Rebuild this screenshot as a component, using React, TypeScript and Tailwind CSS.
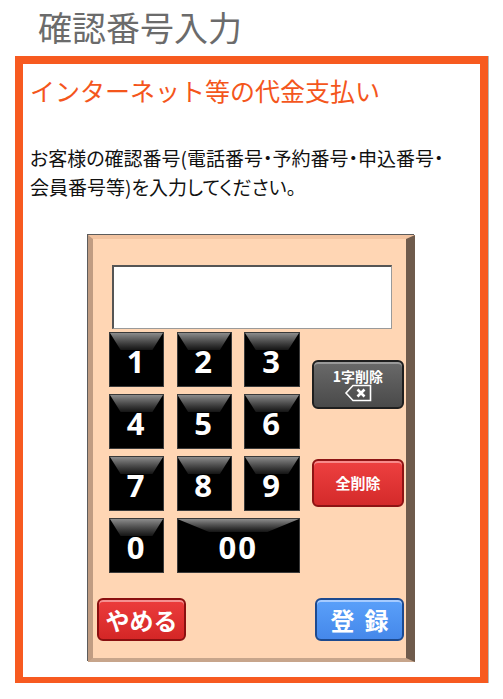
import React from 'react';

const jp = { fontFamily: '"Noto Sans CJK JP", "Noto Sans", sans-serif' };
const num = { fontFamily: '"Open Sans", "DejaVu Sans", sans-serif' };

function Key({ label, wide }: { label: string; wide?: boolean }) {
  return (
    <div
      className={
        wide
          ? 'relative col-span-2 h-[55px] bg-black border border-[#3a3a3a] overflow-hidden flex items-center justify-center'
          : 'relative h-[55px] bg-black border border-[#3a3a3a] overflow-hidden flex items-center justify-center'
      }
    >
      {wide ? (
        <div className="absolute left-0 right-0 top-0 h-[13px] bg-gradient-to-b from-[#8c8c8c] to-[#151515] [clip-path:polygon(0_0,100%_0,74%_100%,26%_100%)]" />
      ) : (
        <div className="absolute left-0 right-0 top-0 h-[17px] bg-gradient-to-b from-[#8c8c8c] to-[#151515] [clip-path:polygon(0_0,100%_0,80%_100%,20%_100%)]" />
      )}
      <span style={num} className="relative mt-[4px] text-white font-bold text-[31px] leading-none tracking-[2px]">
        {label}
      </span>
    </div>
  );
}

function BackspaceIcon() {
  return (
    <svg width="28" height="18" viewBox="0 0 28 18">
      <path d="M9 1.5H26.5V16.5H9L2 9Z" fill="none" stroke="white" strokeWidth="1.6" strokeLinejoin="miter" />
      <path d="M13.5 5.5L20.5 12.5M20.5 5.5L13.5 12.5" stroke="white" strokeWidth="2.6" />
    </svg>
  );
}

export default function App() {
  return (
    <div className="w-[503px] h-[699px] bg-white overflow-hidden" style={jp}>
      <div className="pl-[38px] pt-[10px] text-[34px] leading-[34px] text-[#6b6b6b]">確認番号入力</div>

      <div className="ml-[15px] mt-[12px] w-[473px] h-[627px] border-[8px] border-b-[6px] border-[#f75a20] shadow-[1px_0_0_#b9b9b9] bg-white">
        <div className="pl-[7px] pt-[14px] text-[25px] leading-[25px] text-[#f4561c]">インターネット等の代金支払い</div>

        <p className="pl-[7px] mt-[40px] text-[19px] leading-[29px] text-[#111] [font-feature-settings:'palt']">
          お客様の確認番号(電話番号・予約番号・申込番号・
          <br />
          会員番号等)を入力してください。
        </p>

        {/* keypad panel */}
        <div className="ml-[65px] mt-[34px] w-[327px] h-[427px] shadow-[-1px_-1px_0_#5c5c5c]">
          <div className="w-full h-full bg-[#ffd6b4] border-t-[4px] border-l-[5px] border-r-[9px] border-b-[4px] border-t-[#f2c3a0] border-l-[#c09c82] border-r-[#6f5b4c] border-b-[#c7a58b] box-border">
            <div className="ml-[19px] mt-[26px] w-[280px] h-[64px] bg-white border-t-[2px] border-l-[2px] border-r border-b border-t-[#555] border-l-[#555] border-r-[#9a9a9a] border-b-[#9a9a9a]" />

            <div className="flex mt-[3px] ml-[16px]">
              <div className="grid grid-cols-[55px_55px_56px] gap-x-[12.5px] gap-y-[7px]">
                <Key label="1" />
                <Key label="2" />
                <Key label="3" />
                <Key label="4" />
                <Key label="5" />
                <Key label="6" />
                <Key label="7" />
                <Key label="8" />
                <Key label="9" />
                <Key label="0" />
                <Key label="00" wide />
              </div>

              <div className="ml-[12px] flex flex-col">
                <div className="mt-[28px] w-[92px] h-[49px] rounded-[6px] bg-gradient-to-b from-[#6a6a6a] to-[#4a4a4a] border-[2px] border-[#1f1f1f] shadow-[inset_0_2px_0_#9a9a9a] flex flex-col items-center justify-center">
                  <span className="text-white font-bold text-[14px] leading-[16px]">1字削除</span>
                  <BackspaceIcon />
                </div>
                <div className="mt-[50px] w-[92px] h-[48px] rounded-[6px] bg-gradient-to-b from-[#ee4040] to-[#d42a2a] border-[2px] border-[#8e1414] shadow-[inset_0_2px_0_#f78a8a] flex items-center justify-center">
                  <span className="text-white font-bold text-[15px]">全削除</span>
                </div>
              </div>
            </div>

            <div className="flex justify-between mt-[25px] ml-[4px] mr-[2px]">
              <div className="w-[89px] h-[43px] rounded-[6px] bg-gradient-to-b from-[#ec3c3c] to-[#d42626] border-[2px] border-[#8a1010] shadow-[inset_0_2px_0_#f49090] flex items-center justify-center">
                <span className="text-white font-bold text-[24px] leading-none">やめる</span>
              </div>
              <div className="w-[89px] h-[43px] rounded-[6px] bg-gradient-to-b from-[#5aa0fa] to-[#4588ea] border-[2px] border-[#1d4a8f] shadow-[inset_0_2px_0_#a5cbff] flex items-center justify-center">
                <span className="text-white font-bold text-[24px] leading-none tracking-[10px] pl-[10px]">登録</span>
              </div>
            </div>
          </div>
        </div>
      </div>
    </div>
  );
}
